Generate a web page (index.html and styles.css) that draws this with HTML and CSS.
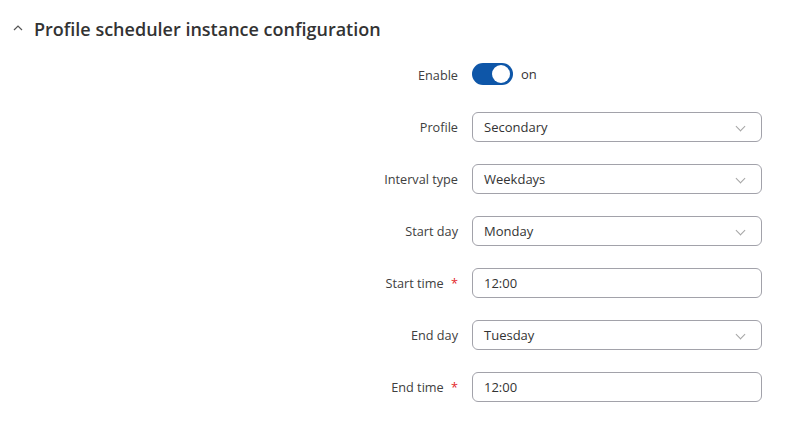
FILE: index.html
```html
<!DOCTYPE html>
<html lang="en">
<head>
    <meta charset="UTF-8">
    <title>Profile scheduler</title>
    <link rel="stylesheet" href="styles.css">
</head>
<body>

<div class="section">
    <div class="section-title">
        <svg class="collapse-icon" width="12" height="12" viewBox="0 0 12 12">
            <path d="M2 8 L6 4 L10 8" fill="none" stroke="#555" stroke-width="1.2"/>
        </svg>
        <h2>Profile scheduler instance configuration</h2>
    </div>

    <div class="form">
        <div class="row">
            <label>Enable</label>
            <div class="field toggle-field">
                <span class="toggle"><span class="knob"></span></span>
                <span class="toggle-text">on</span>
            </div>
        </div>
        <div class="row">
            <label>Profile</label>
            <div class="field select">Secondary</div>
        </div>
        <div class="row">
            <label>Interval type</label>
            <div class="field select">Weekdays</div>
        </div>
        <div class="row">
            <label>Start day</label>
            <div class="field select">Monday</div>
        </div>
        <div class="row">
            <label>Start time <span class="req">*</span></label>
            <div class="field input">12:00</div>
        </div>
        <div class="row">
            <label>End day</label>
            <div class="field select">Tuesday</div>
        </div>
        <div class="row">
            <label>End time <span class="req">*</span></label>
            <div class="field input">12:00</div>
        </div>
    </div>
</div>

</body>
</html>
```

FILE: styles.css
```css
body {
    font-family: "Open Sans", Arial, sans-serif;
    margin: 0;
    padding: 0;
    background-color: #fff;
    color: #333;
}

.section {
    padding: 16px 0 0 12px;
}

.section-title {
    display: flex;
    align-items: center;
    gap: 10px;
    height: 26px;
}

.collapse-icon {
    margin-top: -2px;
}

.section-title h2 {
    margin: 0;
    font-size: 18px;
    font-weight: 600;
    color: #333;
}

.form {
    margin-top: 18px;
    display: flex;
    flex-direction: column;
    gap: 22px;
}

.row {
    display: flex;
    align-items: center;
    height: 30px;
}

.row label {
    width: 446px;
    text-align: right;
    font-size: 12.7px;
    color: #404040;
    padding-right: 14px;
}

.req {
    color: #e3262b;
    margin-left: 4px;
}

.field {
    width: 290px;
    height: 30px;
    box-sizing: border-box;
    font-size: 13px;
    color: #333;
}

.select, .input {
    border: 1px solid #a2a2aa;
    border-radius: 6px;
    padding: 0 11px;
    display: flex;
    align-items: center;
}

.select {
    position: relative;
}

.select::after {
    content: "";
    position: absolute;
    right: 17px;
    top: 10px;
    width: 6px;
    height: 6px;
    border-right: 1px solid #a5a5a5;
    border-bottom: 1px solid #a5a5a5;
    transform: rotate(45deg);
}

.toggle-field {
    display: flex;
    align-items: center;
    gap: 8px;
    margin-top: -3px;
}

.toggle {
    width: 41px;
    height: 22px;
    border-radius: 11px;
    background-color: #0e56a8;
    position: relative;
}

.knob {
    position: absolute;
    right: 3px;
    top: 2px;
    width: 18px;
    height: 18px;
    border-radius: 50%;
    background-color: #fff;
}
```
